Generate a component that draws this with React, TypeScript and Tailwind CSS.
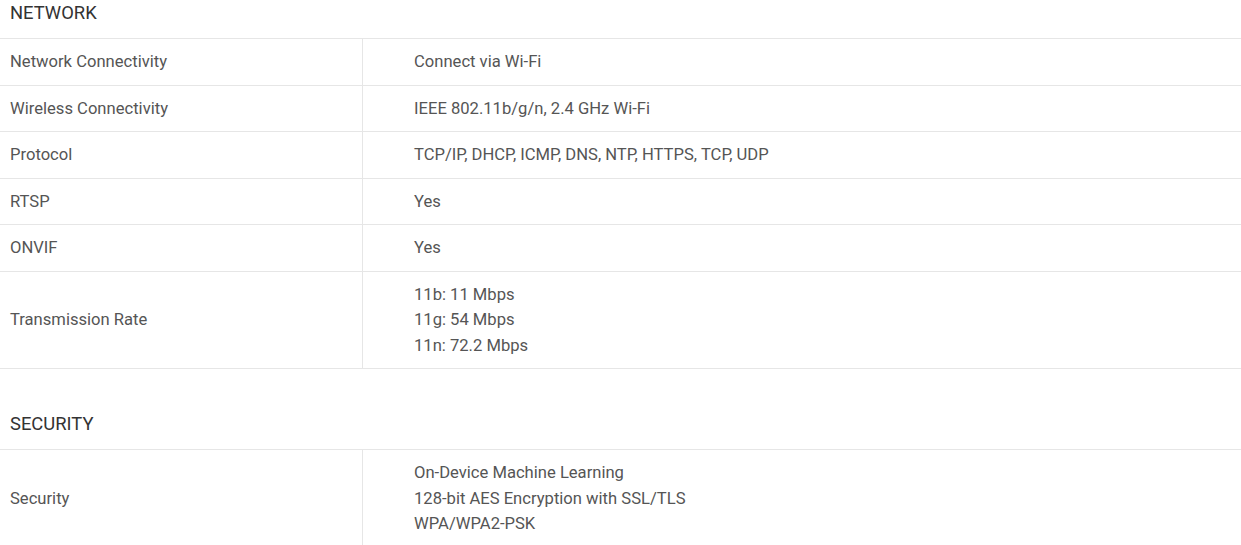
const sections = [
  {
    title: 'NETWORK',
    rows: [
      { label: 'Network Connectivity', value: ['Connect via Wi-Fi'] },
      { label: 'Wireless Connectivity', value: ['IEEE 802.11b/g/n, 2.4 GHz Wi-Fi'] },
      { label: 'Protocol', value: ['TCP/IP, DHCP, ICMP, DNS, NTP, HTTPS, TCP, UDP'] },
      { label: 'RTSP', value: ['Yes'] },
      { label: 'ONVIF', value: ['Yes'] },
      { label: 'Transmission Rate', value: ['11b: 11 Mbps', '11g: 54 Mbps', '11n: 72.2 Mbps'] },
    ],
  },
  {
    title: 'SECURITY',
    rows: [
      {
        label: 'Security',
        value: ['On-Device Machine Learning', '128-bit AES Encryption with SSL/TLS', 'WPA/WPA2-PSK'],
      },
    ],
  },
];

export default function App() {
  return (
    <div className="min-h-screen bg-white font-['Roboto',sans-serif] text-[16.6px] leading-[25.5px] text-[#555]">
      {sections.map((section, i) => (
        <div key={section.title} className={i > 0 ? 'mt-[42px]' : ''}>
          <h2 className="px-[10px] pb-[12px] text-[18.4px] leading-[26px] text-[#333]">{section.title}</h2>
          <div className="border-t border-[#e6e6e6]">
            {section.rows.map((row) => (
              <div key={row.label} className="grid grid-cols-[363px_1fr] border-b border-[#e6e6e6]">
                <div className="flex items-center border-r border-[#e6e6e6] px-[10px] py-[10px]">{row.label}</div>
                <div className="py-[10px] pl-[51px] pr-4">
                  {row.value.map((line) => (
                    <div key={line}>{line}</div>
                  ))}
                </div>
              </div>
            ))}
          </div>
        </div>
      ))}
    </div>
  );
}
